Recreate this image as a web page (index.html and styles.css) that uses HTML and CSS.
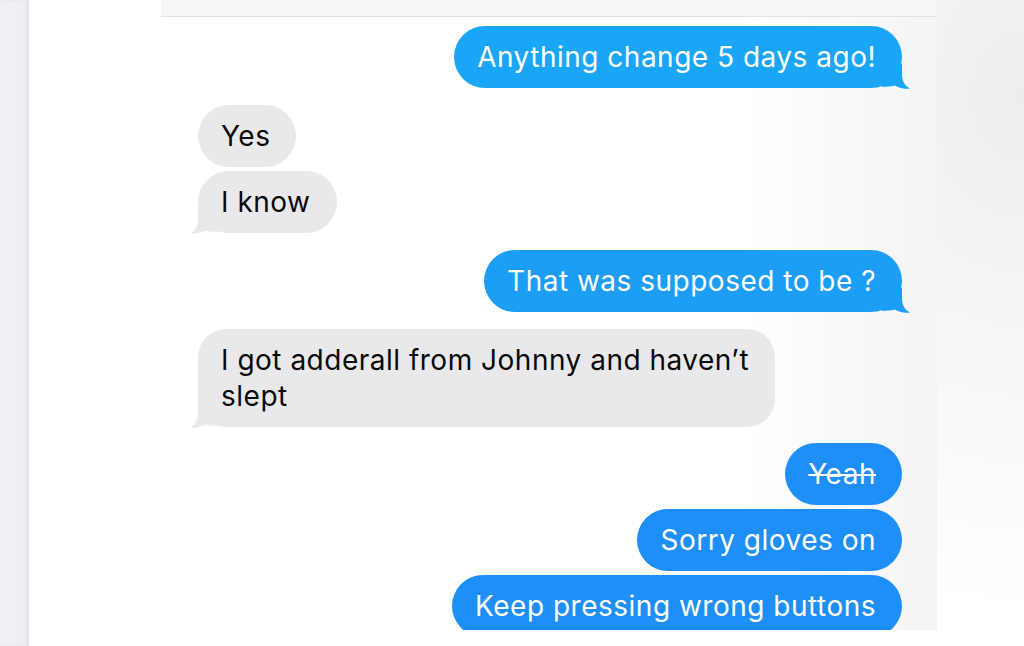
FILE: index.html
```html
<!DOCTYPE html>
<html>
<head>
<meta charset="utf-8">
<link rel="stylesheet" href="styles.css">
</head>
<body>
<div class="page">
  <aside class="rail"></aside>
  <main class="stage">
    <div class="shot">
      <div class="topbar"></div>
      <div class="thread">
        <div class="group sent">
          <div class="bubble blue b1">Anything change 5 days ago!<svg class="tail tail-r" viewBox="0 0 28 25"><path d="M0 0 H20 V10 C20 17 22.5 21.5 28 24.5 C22 25.2 17 24.2 12.5 21.6 C9 22.6 5 23 0 23 Z"/></svg></div>
        </div>
        <div class="group recv">
          <div class="bubble gray">Yes</div>
          <div class="bubble gray">I know<svg class="tail tail-l" viewBox="0 0 28 25"><path d="M0 0 H20 V10 C20 17 22.5 21.5 28 24.5 C22 25.2 17 24.2 12.5 21.6 C9 22.6 5 23 0 23 Z"/></svg></div>
        </div>
        <div class="group sent">
          <div class="bubble blue b2">That was supposed to be ?<svg class="tail tail-r" viewBox="0 0 28 25"><path d="M0 0 H20 V10 C20 17 22.5 21.5 28 24.5 C22 25.2 17 24.2 12.5 21.6 C9 22.6 5 23 0 23 Z"/></svg></div>
        </div>
        <div class="group recv">
          <div class="bubble gray wide">I got adderall from Johnny and haven’t slept<svg class="tail tail-l" viewBox="0 0 28 25"><path d="M0 0 H20 V10 C20 17 22.5 21.5 28 24.5 C22 25.2 17 24.2 12.5 21.6 C9 22.6 5 23 0 23 Z"/></svg></div>
        </div>
        <div class="group sent last">
          <div class="bubble blue b3"><span class="strike">Yeah</span></div>
          <div class="bubble blue b3">Sorry gloves on</div>
          <div class="bubble blue b3">Keep pressing wrong buttons</div>
        </div>
      </div>
    </div>
  </main>
</div>
</body>
</html>
```

FILE: styles.css
```css
* { box-sizing: border-box; }
html, body { margin: 0; padding: 0; }
body {
  width: 1024px;
  height: 646px;
  overflow: hidden;
  background: #ffffff;
  font-family: "Inter", "Liberation Sans", sans-serif;
}
.page {
  display: flex;
  height: 646px;
}
.rail {
  width: 29px;
  flex: none;
  background: #efeff4;
  box-shadow: inset -3px 0 4px rgba(0, 0, 0, 0.05);
  border-right: 1px solid #e4e4ea;
}
.stage {
  flex: 1;
  padding-left: 132px;
  background: radial-gradient(ellipse 420px 520px at 100% 15%, #ededed 0%, #f6f6f6 45%, #ffffff 100%);
}
.shot {
  width: 776px;
  height: 630px;
  overflow: hidden;
  display: flex;
  flex-direction: column;
  background: linear-gradient(to right, #ffffff 0%, #ffffff 75%, #f4f4f4 100%);
}
.topbar {
  height: 17px;
  flex: none;
  background: #f6f6f6;
  border-bottom: 1px solid #e2e2e2;
}
.thread {
  display: flex;
  flex-direction: column;
  gap: 17px;
  padding: 9px 35px 0 37px;
}
.group {
  display: flex;
  flex-direction: column;
  gap: 4px;
}
.group.last { margin-top: -1px; }
.sent { align-items: flex-end; }
.recv { align-items: flex-start; }
.bubble {
  position: relative;
  padding: 13px 26px 13px 23px;
  border-radius: 31px;
  font-size: 28px;
  line-height: 36px;
  letter-spacing: 0.5px;
}
.bubble.gray {
  background: #e9e9eb;
  color: #0a0a0a;
}
.bubble.blue { color: #ffffff; }
.b1 { background: #1aa6f6; }
.b2 { background: #1c9df6; }
.b3 { background: #1e8ff6; }
.b1 .tail { fill: #1aa6f6; }
.b2 .tail { fill: #1c9df6; }
.gray .tail { fill: #e9e9eb; }
.bubble.wide {
  width: 577px;
  padding-right: 14px;
  border-radius: 28px;
}
.tail {
  position: absolute;
  width: 28px;
  height: 25px;
  bottom: -1px;
}
.tail-r { right: -8px; }
.tail-l {
  left: -8px;
  transform: scaleX(-1);
}
.strike {
  text-decoration: line-through;
  text-decoration-thickness: 2px;
}
```
